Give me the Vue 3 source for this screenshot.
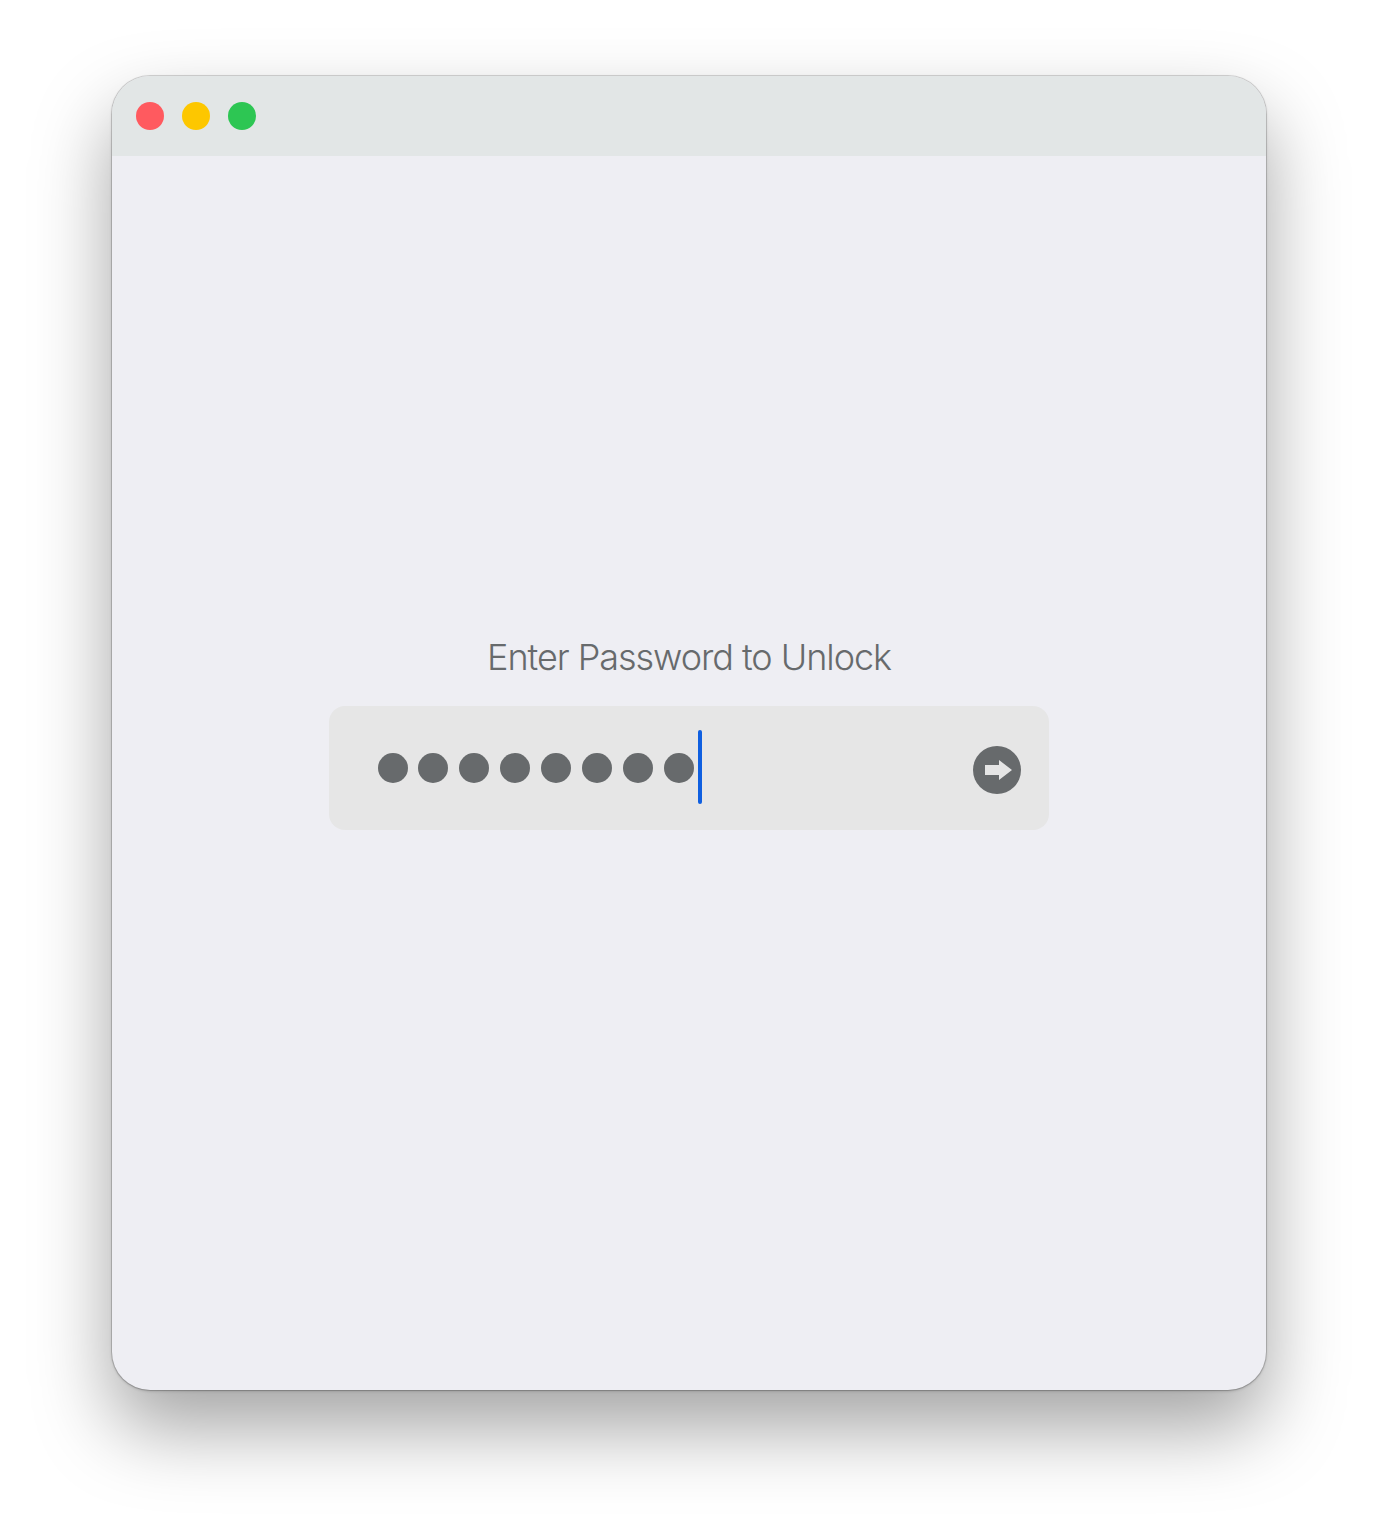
<template>
  <div class="page">
    <div class="window">
      <div class="titlebar">
        <span class="light red"></span>
        <span class="light yellow"></span>
        <span class="light green"></span>
      </div>
      <div class="content">
        <label class="prompt">Enter Password to Unlock</label>
        <div class="field">
          <div class="dots">
            <span class="dot" v-for="n in length" :key="n"></span>
          </div>
          <span class="caret"></span>
          <button class="go">
            <svg width="48" height="48" viewBox="0 0 48 48">
              <circle cx="24" cy="24" r="24" fill="#676a6c" />
              <path d="M12 19H26V14L39 24L26 34V29H12Z" fill="#e5e5e5" />
            </svg>
          </button>
        </div>
      </div>
    </div>
  </div>
</template>

<script setup>
const length = 8;
</script>

<style scoped>
.page {
  width: 1378px;
  height: 1538px;
  box-sizing: border-box;
  padding: 76px 112px 148px;
  background: #fff;
  overflow: hidden;
}

.window {
  width: 1154px;
  height: 1314px;
  border-radius: 38px;
  overflow: hidden;
  display: flex;
  flex-direction: column;
  background: #eeeef3;
  box-shadow: 0 0 0 1px rgba(0, 0, 0, 0.14), 0 1px 3px rgba(0, 0, 0, 0.22), 0 38px 78px rgba(0, 0, 0, 0.36);
}

.titlebar {
  height: 80px;
  flex-shrink: 0;
  display: flex;
  align-items: center;
  gap: 18px;
  padding-left: 24px;
  background: #e2e6e6;
}

.light {
  width: 28px;
  height: 28px;
  border-radius: 50%;
}

.red {
  background: #ff5a5f;
}

.yellow {
  background: #fdc700;
}

.green {
  background: #2dc653;
}

.content {
  flex: 1;
  display: flex;
  flex-direction: column;
  align-items: center;
  padding-top: 479px;
}

.prompt {
  font-family: Inter, "Liberation Sans", sans-serif;
  font-size: 36px;
  font-weight: 300;
  line-height: 44px;
  letter-spacing: -1.05px;
  color: #676a6c;
}

.field {
  width: 720px;
  height: 124px;
  margin-top: 27px;
  box-sizing: border-box;
  padding: 0 28px 0 49px;
  display: flex;
  align-items: center;
  border-radius: 16px;
  background: #e6e6e6;
}

.dots {
  display: flex;
  gap: 11px;
}

.dot {
  width: 30px;
  height: 30px;
  border-radius: 50%;
  background: #676a6c;
}

.dot:first-child {
  margin-right: -1px;
}

.caret {
  width: 4px;
  height: 74px;
  margin: -2px 0 0 4px;
  border-radius: 2px;
  background: #0f5fe0;
}

.go {
  width: 48px;
  height: 48px;
  margin: 4px 0 0 auto;
  padding: 0;
  border: none;
  background: none;
}

.go svg {
  display: block;
}
</style>
